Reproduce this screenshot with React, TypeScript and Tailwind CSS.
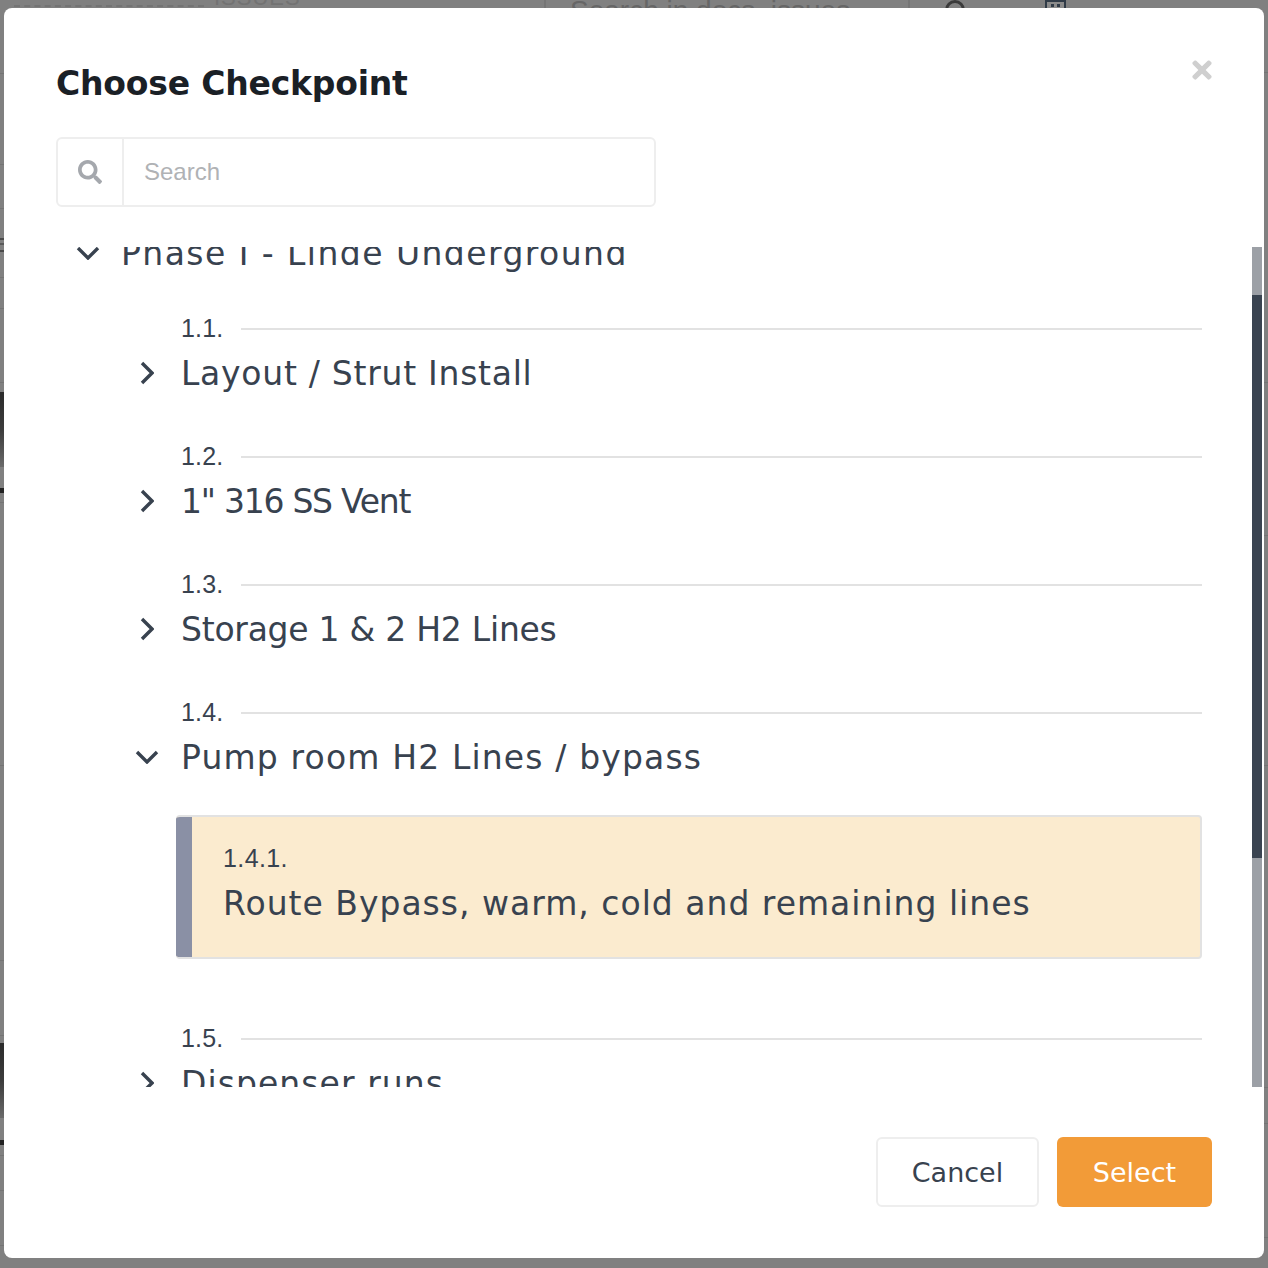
import { FaSearch, FaTimes } from 'react-icons/fa';

const HEADING_FONT = "font-['DejaVu_Sans',sans-serif]";
const NUMBER_FONT = "font-['Liberation_Sans',Arial,sans-serif]";

// faint rows of the page behind the overlay, showing at the window edges
const leftLines = ['top-[73px]', 'top-[164px]', 'top-[208px]', 'top-[277px]', 'top-[308px]', 'top-[382px]', 'top-[502px]', 'top-[765px]', 'top-[960px]', 'top-[1035px]', 'top-[1155px]', 'top-[1190px]', 'top-[1245px]'];
const rightLines = ['top-[72px]', 'top-[382px]', 'top-[535px]', 'top-[765px]', 'top-[1087px]', 'top-[1123px]', 'top-[1237px]'];

function ChevronRight() {
  return (
    <svg width="14" height="24" viewBox="0 0 14 24" fill="none" stroke="#38424f" strokeWidth="3.4">
      <path d="M2 2 L12 12 L2 22" />
    </svg>
  );
}

function ChevronDown() {
  return (
    <svg width="24" height="14" viewBox="0 0 24 14" fill="none" stroke="#38424f" strokeWidth="3.4">
      <path d="M2 2 L12 12 L22 2" />
    </svg>
  );
}

function NumberRow({ label }: { label: string }) {
  return (
    <div className="flex h-[30px] items-center gap-[17px] pl-[65px] pr-[10px]">
      <span className={`${NUMBER_FONT} text-[25px] leading-[30px] tracking-[0.2px] text-[#38424f]`}>{label}</span>
      <div className="mt-[2px] h-[2px] flex-1 bg-[#e2e2e2]" />
    </div>
  );
}

function TitleRow({ title, tracking, open }: { title: string; tracking: string; open?: boolean }) {
  return (
    <div className="mt-2 flex h-[44px] items-center">
      <div className="flex w-[65px] justify-center pr-1">{open ? <ChevronDown /> : <ChevronRight />}</div>
      <span className={`${HEADING_FONT} ${tracking} pt-[2px] text-[33px] leading-[44px] text-[#38424f]`}>{title}</span>
    </div>
  );
}

const items = [
  { label: '1.1.', title: 'Layout / Strut Install', tracking: 'tracking-[0.73px]' },
  { label: '1.2.', title: '1" 316 SS Vent', tracking: 'tracking-[-1.25px]' },
  { label: '1.3.', title: 'Storage 1 & 2 H2 Lines', tracking: 'tracking-[-0.25px]' },
];

export default function App() {
  return (
    <div className="relative h-[1268px] w-[1268px] overflow-hidden bg-[#808080]">
      {/* page behind the overlay */}
      {leftLines.map((top) => (
        <div key={top} className={`absolute left-0 h-[1px] w-1 bg-[#747474] ${top}`} />
      ))}
      {rightLines.map((top) => (
        <div key={top} className={`absolute right-0 h-[1px] w-1 bg-[#747474] ${top}`} />
      ))}
      <div className="absolute left-[14px] top-[5px] w-[190px] border-t-2 border-dashed border-[#747474]" />
      <div className={`${NUMBER_FONT} absolute left-[214px] top-[-14px] text-[22px] leading-[24px] tracking-[1px] text-[#727272]`}>ISSUES</div>
      <div className="absolute left-[544px] top-0 h-2 w-[2px] bg-[#757575]" />
      <div className="absolute left-[908px] top-0 h-2 w-[2px] bg-[#757575]" />
      <div className={`${NUMBER_FONT} absolute left-[570px] top-[-5px] text-[28px] leading-[32px] text-[#666666]`}>Search in docs, issues</div>
      <div className="absolute left-[945px] top-0 h-5 w-5 rounded-full border-[3px] border-[#3a3a3a]" />
      <div className="absolute left-[1045px] top-0 flex h-3 w-[21px] justify-center gap-[3px] border-2 border-[#2f3a46] bg-[#8a8a8a] pt-[2px]">
        <div className="h-[3px] w-[3px] bg-[#2f3a46]" />
        <div className="h-[3px] w-[3px] bg-[#2f3a46]" />
      </div>
      <div className="absolute left-0 top-[238px] h-[2px] w-1 bg-[#4a4a4a]" />
      <div className="absolute left-0 top-[243px] h-[2px] w-1 bg-[#5a5a5a]" />
      <div className="absolute left-0 top-[250px] h-[2px] w-1 bg-[#4a4a4a]" />
      <div className="absolute left-0 top-[392px] h-[75px] w-1 bg-linear-to-b from-[#2b2b2b] via-[#3c3c3c] to-[#6a6a6a]" />
      <div className="absolute left-0 top-[488px] h-[5px] w-1 bg-[#222222]" />
      <div className="absolute left-0 top-[1043px] h-[75px] w-1 bg-linear-to-b from-[#2b2b2b] via-[#3c3c3c] to-[#6a6a6a]" />
      <div className="absolute left-0 top-[1140px] h-[5px] w-1 bg-[#222222]" />

      <div className="relative ml-1 mt-2 flex h-[1250px] w-[1260px] flex-col rounded-lg bg-white px-[52px] pb-[51px] pt-[54px]">
        <h2 className={`${HEADING_FONT} text-[33px] font-bold leading-[44px] tracking-[-0.2px] text-[#1a2026]`}>Choose Checkpoint</h2>
        <FaTimes className="absolute left-[1184px] top-[48px] text-[#cfcfcf]" size={28} />

        <div className="mt-[31px] flex h-[70px] w-[600px] rounded-md border-2 border-[#eeeeee]">
          <div className="flex w-[66px] items-center justify-center border-r-2 border-[#eeeeee]">
            <FaSearch className="text-[#a5a8ad]" size={24} />
          </div>
          <input
            placeholder="Search"
            className={`${NUMBER_FONT} flex-1 bg-transparent px-5 text-[24px] outline-none placeholder:text-[#b0b2b5]`}
          />
        </div>

        <div className="mt-10 h-[840px] overflow-hidden">
          <div className="-mt-[16px]">
            <div className="flex h-[44px] items-center">
              <div className="flex w-[65px] justify-center pr-[2px]"><ChevronDown /></div>
              <span className={`${HEADING_FONT} pt-[2px] text-[33px] leading-[44px] tracking-[1.44px] text-[#38424f]`}>Phase I - Linde Underground</span>
            </div>

            <div className="mt-[38px] flex flex-col gap-[46px] pl-[60px]">
              {items.map((item) => (
                <div key={item.label}>
                  <NumberRow label={item.label} />
                  <TitleRow title={item.title} tracking={item.tracking} />
                </div>
              ))}

              <div>
                <NumberRow label="1.4." />
                <TitleRow title="Pump room H2 Lines / bypass" tracking="tracking-[1.15px]" open />
                <div className="ml-[60px] mr-[10px] mt-9 flex h-[144px] overflow-hidden rounded border-y-2 border-r-2 border-[#e2e2e2] bg-[#fbebcf]">
                  <div className="-my-[2px] w-4 bg-[#8a90a5]" />
                  <div className="pl-[31px] pt-[26px]">
                    <div className={`${NUMBER_FONT} text-[25px] leading-[30px] tracking-[0.4px] text-[#38424f]`}>1.4.1.</div>
                    <div className={`${HEADING_FONT} mt-[7px] pt-[2px] text-[33px] leading-[44px] tracking-[1px] text-[#38424f]`}>Route Bypass, warm, cold and remaining lines</div>
                  </div>
                </div>
                <div className="mt-16">
                  <NumberRow label="1.5." />
                  <TitleRow title="Dispenser runs" tracking="tracking-[1.07px]" />
                </div>
              </div>
            </div>
          </div>
        </div>

        <div className="mt-[50px] flex h-[70px] justify-end gap-[18px]">
          <button className={`${HEADING_FONT} h-full w-[163px] rounded-md border-2 border-[#eeeeee] bg-white pt-[2px] text-[27px] text-[#38424f]`}>Cancel</button>
          <button className={`${HEADING_FONT} h-full w-[155px] rounded-md bg-[#f29b38] pt-[2px] text-[27px] text-white`}>Select</button>
        </div>

        {/* scrollbar */}
        <div className="absolute left-[1248px] top-[239px] h-[840px] w-[10px] bg-[#9ca0a6]">
          <div className="mt-[48px] h-[563px] bg-[#3a4451]" />
        </div>
      </div>
    </div>
  );
}
